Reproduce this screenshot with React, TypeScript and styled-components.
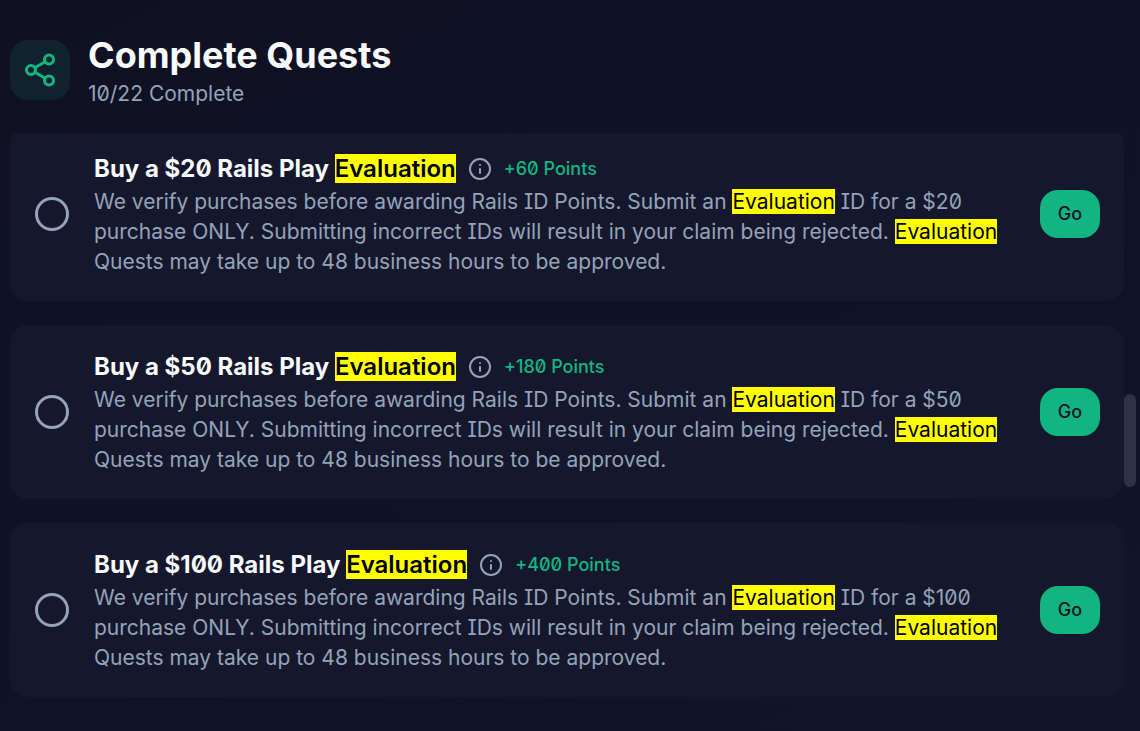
import React from 'react';
import styled, { createGlobalStyle } from 'styled-components';
import { Share2 } from 'lucide-react';

const GlobalStyle = createGlobalStyle`
  *, *::before, *::after { box-sizing: border-box; }
  body {
    margin: 0;
    color: #f8fafc;
    font-family: Inter, "Liberation Sans", sans-serif;
    font-feature-settings: "zero", "cv08";
    background: #101326;
  }
  button, input { font: inherit; font-feature-settings: inherit; }
`;

const Page = styled.main`
  min-height: 100vh;
  padding: 31px 4px 10px 10px;
  background: linear-gradient(155deg, #0f1123 0%, #101226 60%, #111629 100%);
`;

const Header = styled.header`
  display: flex;
  align-items: center;
  gap: 18px;
`;

const IconTile = styled.div`
  display: grid;
  place-items: center;
  width: 60px;
  height: 60px;
  border-radius: 18px;
  background: #10222e;
  color: #14b581;
`;

const Heading = styled.h1`
  margin: 0;
  font-size: 36px;
  line-height: 48px;
  font-weight: 700;
`;

const Progress = styled.p`
  margin: 0;
  font-size: 21px;
  line-height: 30px;
  color: #94a3b8;
`;

const ScrollArea = styled.section`
  display: flex;
  margin-top: 24px;
  overflow: hidden;
`;

const QuestList = styled.ul`
  flex: 1;
  min-width: 0;
  margin: -6px 0 0;
  padding: 0;
  list-style: none;
  display: flex;
  flex-direction: column;
  gap: 24px;
`;

const ScrollTrack = styled.div`
  flex: none;
  width: 12px;
  padding-top: 261px;
`;

const ScrollThumb = styled.div`
  height: 93px;
  border-radius: 6px;
  background: #2d3247;
`;

const Card = styled.li`
  display: flex;
  align-items: center;
  gap: 24px;
  padding: 24px;
  border-radius: 18px;
  background: #15182d;
`;

const DoneBox = styled.input`
  appearance: none;
  flex: none;
  width: 34px;
  height: 34px;
  margin: 1px;
  border: 3px solid #94a3b8;
  border-radius: 50%;
  cursor: pointer;

  &:checked { background: #12b981; border-color: #12b981; }
`;

const CardBody = styled.div`
  flex: 1;
  min-width: 0;
`;

const TitleRow = styled.div`
  display: flex;
  align-items: center;
  gap: 12px;
`;

const Title = styled.label`
  font-size: 24px;
  line-height: 36px;
  font-weight: 700;
`;

const Mark = styled.mark<{ $strong?: boolean }>`
  background: #ffff00;
  color: #000000;
  font-weight: ${(p) => (p.$strong ? 600 : 400)};
`;

const InfoButton = styled.button`
  display: flex;
  padding: 0;
  border: 0;
  background: none;
  color: #94a3b8;
  cursor: pointer;
`;

const Points = styled.span`
  font-size: 18px;
  line-height: 24px;
  font-weight: 500;
  color: #14b581;
`;

const Description = styled.p`
  margin: 0;
  font-size: 21px;
  line-height: 30px;
  color: #94a3b8;
`;

const GoButton = styled.button`
  flex: none;
  height: 48px;
  padding: 0 18px;
  border: 0;
  border-radius: 18px;
  background: #12b580;
  color: #101326;
  font-size: 18px;
  line-height: 24px;
  font-weight: 500;
  cursor: pointer;
`;

const InfoIcon = () => (
  <svg width="24" height="24" viewBox="0 0 24 24" fill="none" stroke="currentColor" strokeWidth="2" aria-hidden="true">
    <circle cx="12" cy="12" r="10" />
    <path d="M12 16v-4M12 8h.01" strokeLinecap="round" />
  </svg>
);

const quests = [
  { price: '$20', points: 60 },
  { price: '$50', points: 180 },
  { price: '$100', points: 400 },
];

function Quest({ price, points }: { price: string; points: number }) {
  const id = `quest-${points}`;
  return (
    <Card>
      <DoneBox type="checkbox" id={id} />
      <CardBody>
        <TitleRow>
          <Title htmlFor={id}>
            Buy a {price} Rails Play <Mark $strong>Evaluation</Mark>
          </Title>
          <InfoButton type="button" aria-label="More information">
            <InfoIcon />
          </InfoButton>
          <Points>+{points} Points</Points>
        </TitleRow>
        <Description>
          We verify purchases before awarding Rails ID Points. Submit an <Mark>Evaluation</Mark> ID for a {price}{' '}
          purchase ONLY. Submitting incorrect IDs will result in your claim being rejected. <Mark>Evaluation</Mark>{' '}
          Quests may take up to 48 business hours to be approved.
        </Description>
      </CardBody>
      <GoButton type="button">Go</GoButton>
    </Card>
  );
}

export default function App() {
  return (
    <>
      <GlobalStyle />
      <Page>
        <Header>
          <IconTile>
            <Share2 size={36} strokeWidth={2} />
          </IconTile>
          <div>
            <Heading>Complete Quests</Heading>
            <Progress>10/22 Complete</Progress>
          </div>
        </Header>
        <ScrollArea>
          <QuestList>
            {quests.map((q) => (
              <Quest key={q.price} {...q} />
            ))}
          </QuestList>
          <ScrollTrack>
            <ScrollThumb />
          </ScrollTrack>
        </ScrollArea>
      </Page>
    </>
  );
}
